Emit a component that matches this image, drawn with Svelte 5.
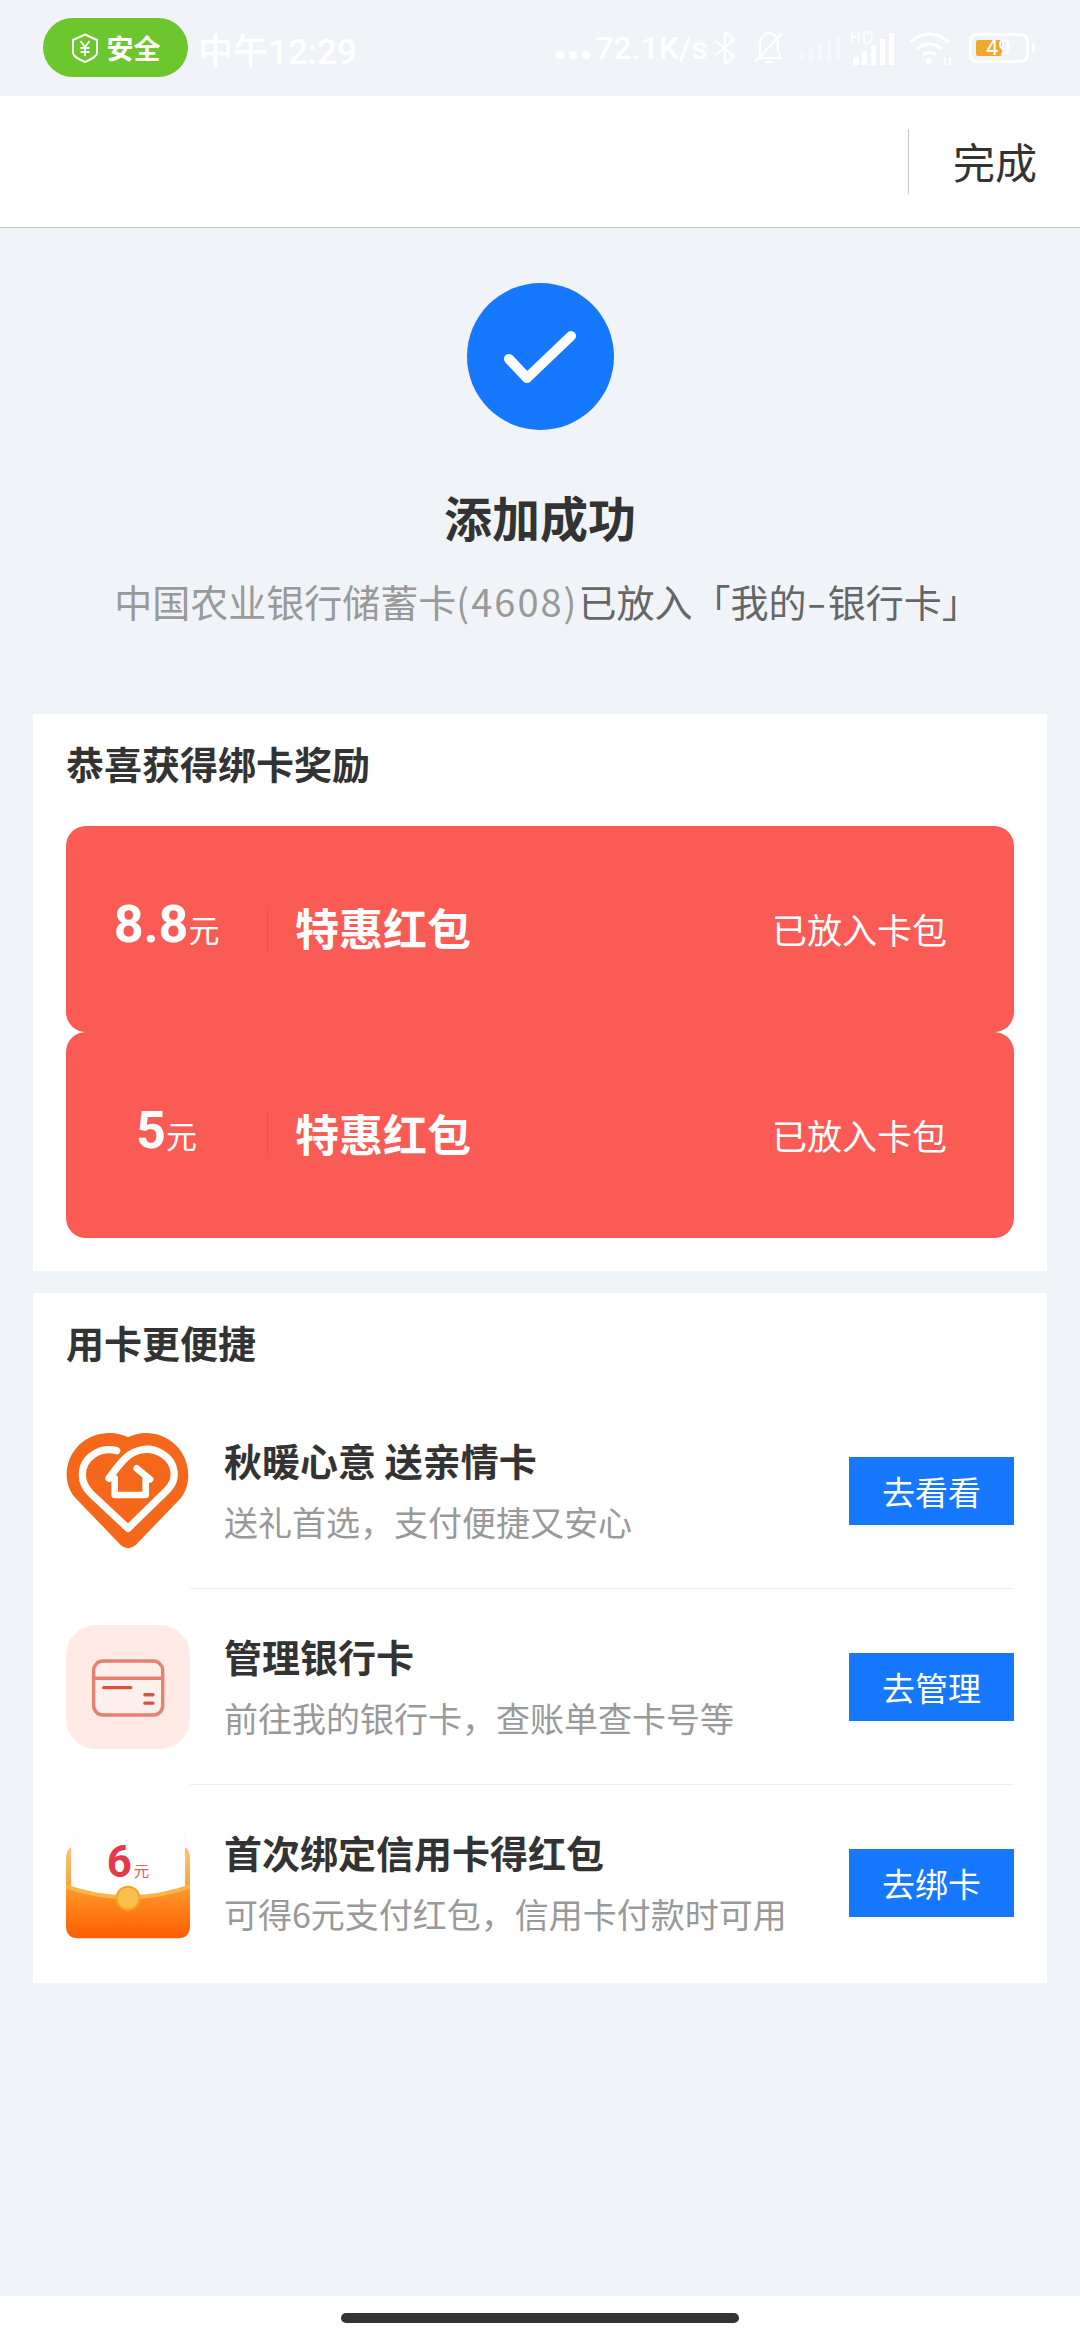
<script>
  const rewards = [
    { amount: "8.8", title: "特惠红包", status: "已放入卡包" },
    { amount: "5", title: "特惠红包", status: "已放入卡包" },
  ];

  const services = [
    { icon: "heart", title: "秋暖心意 送亲情卡", desc: "送礼首选\uFF0C支付便捷又安心", action: "去看看" },
    { icon: "card", title: "管理银行卡", desc: "前往我的银行卡\uFF0C查账单查卡号等", action: "去管理" },
    { icon: "packet", title: "首次绑定信用卡得红包", desc: "可得6元支付红包\uFF0C信用卡付款时可用", action: "去绑卡" },
  ];
</script>

<div class="page">
  <!-- status bar, white on pale so it barely shows -->
  <div class="status">
    <div class="safe">
      <svg class="shield" viewBox="0 0 28 30" fill="none" stroke="#fff" stroke-width="2">
        <path d="M14 1.5 26 7v13c0 3-7 7-12 9C9 27 2 23 2 20V7Z" />
        <path d="m9.5 8 4.500 6 4.500-6M14 14v9M9.500 15h9M9.500 19h9" stroke-width="1.800" />
      </svg>
      <span>安全</span>
    </div>
    <span class="time">中午12:29</span>
    <div class="status-right">
      <span class="speed"><i></i><i></i><i></i>72.1K/s</span>
      <svg class="s-icon" width="22" height="34" viewBox="0 0 22 34" fill="none" stroke="#fff" stroke-width="2">
        <path d="m2 10 18 15-9 8V1l9 8L2 24" />
      </svg>
      <svg class="s-icon bell" width="32" height="34" viewBox="0 0 32 34" fill="none" stroke="#fff" stroke-width="2">
        <path d="M7 24V13C7 7 11 2 16 2s9 5 9 11v7l3 7H4M12 31h8M2 31 29 2" />
      </svg>
      <svg class="s-icon sig" width="40" height="24" viewBox="0 0 40 24" fill="#fff" opacity=".45">
        <rect x="0" y="18" width="4" height="6" />
        <rect x="9" y="13" width="4" height="11" />
        <rect x="18" y="8" width="4" height="16" />
        <rect x="27" y="4" width="4" height="20" />
        <rect x="36" y="0" width="4" height="24" />
      </svg>
      <svg class="s-icon sig2" width="44" height="34" viewBox="0 0 44 34" fill="#fff">
        <rect x="2" y="26" width="6" height="8" />
        <rect x="11" y="20" width="5" height="14" />
        <rect x="20" y="14" width="5" height="20" />
        <rect x="29" y="8" width="5" height="26" />
        <rect x="38" y="2" width="5" height="32" />
        <path d="M1 1v11M8 1v11M1 6h7M13 1v11h3q5 0 5-5.500T16 1Z" fill="none" stroke="#fff" stroke-width="1.500" />
      </svg>
      <svg class="s-icon wifi" width="42" height="34" viewBox="0 0 42 34" fill="none" stroke="#fff" stroke-width="3">
        <path d="M1 11Q20-5 40 11M8 18q12-10 25 0M14 24q6-5 13 0" />
        <circle cx="20" cy="30" r="3" fill="#fff" stroke="none" />
        <path d="M36 26v8M41 26v8" stroke-width="2" />
      </svg>
      <div class="battery">
        <div class="battery-body">
          <div class="battery-fill"></div>
          <span>49</span>
        </div>
        <div class="battery-tip"></div>
      </div>
    </div>
  </div>

  <header class="topbar">
    <div class="topbar-line"></div>
    <span class="done">完成</span>
  </header>

  <main class="content">
    <section class="hero">
      <div class="check">
        <svg width="74" height="54" viewBox="0 0 74 54" fill="none" stroke="#fff" stroke-width="10" stroke-linecap="round" stroke-linejoin="round">
          <path d="M6 29 24 48 68 6" />
        </svg>
      </div>
      <h1>添加成功</h1>
      <p><span class="light">中国农业银行储蓄卡<span class="num">(4608)</span></span>已放入「我的<span class="dash">-</span>银行卡」</p>
    </section>

    <section class="panel rewards">
      <h2>恭喜获得绑卡奖励</h2>
      {#each rewards as r}
        <div class="coupon">
          <div class="amount"><b>{r.amount}</b><span>元</span></div>
          <div class="coupon-title">{r.title}</div>
          <div class="coupon-status">{r.status}</div>
        </div>
      {/each}
    </section>

    <section class="panel services">
      <h2>用卡更便捷</h2>
      {#each services as s}
        <div class="row">
          <div class="row-icon">
            {#if s.icon === "heart"}
              <svg width="124" height="118" viewBox="76 96 372 354">
                <path fill="#f5671b" d="M262 112C300 92 360 92 405 135 450 180 455 250 420 295L285 435Q262 455 240 435L105 295C65 250 70 180 115 135 160 92 225 92 262 112Z" />
                <path fill="none" stroke="#fff" stroke-width="22" stroke-linecap="round" stroke-linejoin="round" d="M228 152C180 140 125 170 125 225 125 250 135 265 150 280L262 385 375 275C395 255 403 240 400 215 395 170 345 140 300 150 270 156 250 172 205 235" />
                <path fill="none" stroke="#fff" stroke-width="20" stroke-linecap="round" stroke-linejoin="round" d="M222 235V285H315V238M288 205 328 238" />
              </svg>
            {:else if s.icon === "card"}
              <svg width="124" height="124" viewBox="78 78 368 368">
                <rect x="78" y="78" width="368" height="368" rx="90" fill="#ffeae6" />
                <rect x="160" y="185" width="205" height="160" rx="28" fill="#fdf0ec" stroke="#e8806f" stroke-width="10" />
                <path d="M160 236H365" stroke="#e8806f" stroke-width="10" />
                <path d="M190 264H270M312 285H336M312 310H336" stroke="#d9523f" stroke-width="10" stroke-linecap="round" />
              </svg>
            {:else}
              <svg width="124" height="112" viewBox="78 85 368 332">
                <defs>
                  <linearGradient id="front" x1="0" y1="0" x2="0" y2="1">
                    <stop offset="0" stop-color="#ff9a2c" />
                    <stop offset="1" stop-color="#ff5c00" />
                  </linearGradient>
                  <linearGradient id="side" x1="0" y1="0" x2="0" y2="1">
                    <stop offset="0" stop-color="#f7c37a" />
                    <stop offset="1" stop-color="#f39a1f" />
                  </linearGradient>
                </defs>
                <path d="M93 145Q78 152 78 180V320H93ZM431 145Q446 152 446 180V320H431Z" fill="url(#side)" />
                <path d="M95 115Q95 85 125 85H400Q430 85 430 115V300H95Z" fill="#fff" stroke="#f8f8f6" stroke-width="2" />
                <text x="236" y="232" text-anchor="middle" class="six">6</text>
                <text x="302" y="232" text-anchor="middle" class="yuan">元</text>
                <path d="M78 262Q262 325 446 262V378Q446 415 410 415H114Q78 415 78 378Z" fill="url(#front)" />
                <path d="M78 262Q262 325 446 262" fill="none" stroke="#fbb547" stroke-width="12" />
                <circle cx="262" cy="296" r="34" fill="#fbbf4e" stroke="#f3a42a" stroke-width="6" />
              </svg>
            {/if}
          </div>
          <div class="row-body">
            <div class="row-text">
              <div class="row-title">{s.title}</div>
              <div class="row-desc">{s.desc}</div>
            </div>
            <div class="go">{s.action}</div>
          </div>
        </div>
      {/each}
    </section>
  </main>

  <footer class="navbar"><div class="handle"></div></footer>
</div>

<style>
  :global(body) {
    margin: 0;
    background: #f0f3f8;
  }

  .page {
    width: 1080px;
    height: 2340px;
    display: flex;
    flex-direction: column;
    font-family: "Noto Sans CJK SC", "Noto Sans", sans-serif;
    color: #333;
    overflow: hidden;
  }

  .status {
    height: 96px;
    display: flex;
    align-items: center;
    color: #fff;
    padding-left: 43px;
    padding-right: 45px;
    box-sizing: border-box;
    flex-shrink: 0;
  }

  .safe {
    width: 145px;
    height: 59px;
    margin-top: -1px;
    border-radius: 30px;
    background: #6cc72f;
    display: flex;
    align-items: center;
    justify-content: center;
    gap: 8px;
    font-size: 27px;
    font-weight: 700;
  }

  .shield {
    width: 28px;
    height: 30px;
  }

  .time {
    margin-left: 10px;
    font-size: 35px;
    font-weight: 500;
    font-family: Roboto, "Noto Sans CJK SC", sans-serif;
  }

  .status-right {
    margin-left: auto;
    display: flex;
    align-items: center;
  }

  .speed {
    display: flex;
    align-items: baseline;
    font-family: Roboto, sans-serif;
    font-size: 32px;
    font-weight: 500;
  }

  .speed i {
    width: 8px;
    height: 8px;
    border-radius: 50%;
    background: #fff;
    margin-right: 5px;
  }

  .s-icon {
    margin-left: 6px;
  }

  .bell {
    margin-left: 17px;
  }

  .sig {
    margin-left: 15px;
  }

  .sig2 {
    margin-left: 11px;
  }

  .wifi {
    margin-left: 14px;
  }

  .battery {
    margin-left: 18px;
    display: flex;
    align-items: center;
    gap: 3px;
  }

  .battery-body {
    position: relative;
    width: 60px;
    height: 30px;
    border: 3px solid #fff;
    border-radius: 8px;
    box-sizing: border-box;
    padding: 4px;
  }

  .battery-fill {
    width: 26px;
    height: 100%;
    border-radius: 2px;
    background: #f0a92f;
  }

  .battery-body span {
    position: absolute;
    left: 14px;
    top: -3px;
    font: 22px/30px Roboto, sans-serif;
    color: #fff;
  }

  .battery-tip {
    width: 3px;
    height: 10px;
    background: #fff;
    border-radius: 2px;
  }

  .topbar {
    height: 132px;
    box-sizing: border-box;
    flex-shrink: 0;
    background: #fff;
    border-bottom: 1px solid #c9c9c9;
    display: flex;
    align-items: center;
    justify-content: flex-end;
    padding-right: 43px;
  }

  .topbar-line {
    width: 1px;
    height: 65px;
    background: #c8c8c8;
  }

  .done {
    margin-left: 44px;
    margin-top: -2px;
    font-size: 42px;
    line-height: 60px;
    color: #333;
  }

  .content {
    flex: 1;
  }

  .hero {
    padding-top: 55px;
    display: flex;
    flex-direction: column;
    align-items: center;
  }

  .check {
    width: 147px;
    height: 147px;
    border-radius: 50%;
    background: #1677ff;
    display: flex;
    align-items: center;
    justify-content: center;
  }

  h1 {
    margin: 56px 0 0;
    font-size: 48px;
    line-height: 60px;
    font-weight: 700;
    color: #333;
  }

  .hero p {
    margin: 30px 0 0;
    padding-left: 14px;
    font-size: 38px;
    line-height: 50px;
    color: #666;
    font-weight: 400;
  }

  .light {
    color: #999;
  }

  .num {
    letter-spacing: 2px;
  }

  .dash {
    display: inline-block;
    transform: scaleX(1.5);
    margin: 0 4px;
  }

  .panel {
    margin: 0 33px;
    background: #fff;
    padding: 0 33px;
  }

  .rewards {
    margin-top: 88px;
    padding-bottom: 33px;
  }

  .services {
    margin-top: 22px;
    padding-bottom: 2px;
  }

  h2 {
    margin: 0;
    font-size: 38px;
    font-weight: 700;
    color: #333;
  }

  .rewards h2 {
    line-height: 44px;
    padding: 27px 0 41px;
  }

  .services h2 {
    line-height: 44px;
    padding: 27px 0 29px;
  }

  .coupon {
    height: 206px;
    background: #fa5b55;
    border-radius: 20px;
    display: flex;
    align-items: center;
    color: #fff;
  }

  .amount {
    width: 202px;
    box-sizing: border-box;
    height: 46px;
    display: flex;
    align-items: baseline;
    justify-content: center;
    border-right: 1px solid #f0504b;
    line-height: 46px;
  }

  .amount b {
    font-family: Roboto, sans-serif;
    font-size: 52px;
    font-weight: 700;
    margin-top: -28px;
  }

  .amount span {
    font-size: 31px;
    font-weight: 400;
  }

  .coupon-title {
    margin-left: 27px;
    margin-top: -5px;
    font-size: 44px;
    line-height: 60px;
    font-weight: 700;
  }

  .coupon-status {
    margin-left: auto;
    margin-right: 67px;
    font-size: 35px;
    line-height: 50px;
  }

  .row {
    height: 196px;
    display: flex;
    align-items: center;
  }

  .row-icon {
    width: 124px;
    height: 124px;
    flex-shrink: 0;
    display: flex;
    align-items: center;
    justify-content: center;
  }

  .row-body {
    flex: 1;
    height: 100%;
    box-sizing: border-box;
    padding-left: 34px;
    display: flex;
    align-items: center;
    justify-content: space-between;
    border-bottom: 1px solid #eee;
  }

  .row:last-child .row-body {
    border-bottom: 0;
  }

  .row-title {
    font-size: 38px;
    line-height: 50px;
    font-weight: 700;
    color: #333;
  }

  .row-desc {
    margin-top: 12px;
    font-size: 34px;
    line-height: 50px;
    color: #999;
  }

  .go {
    width: 165px;
    height: 68px;
    background: #1677ff;
    color: #fff;
    font-size: 33px;
    line-height: 68px;
    text-align: center;
  }

  .six {
    font-family: Roboto, sans-serif;
    font-weight: 700;
    font-size: 130px;
    fill: #e03a4b;
  }

  .yuan {
    font-size: 46px;
    fill: #d9606a;
  }

  .navbar {
    height: 44px;
    flex-shrink: 0;
    background: #fff;
    display: flex;
    justify-content: center;
    padding-top: 17px;
    box-sizing: border-box;
  }

  .handle {
    width: 398px;
    height: 10px;
    border-radius: 5px;
    background: #333;
  }
</style>
